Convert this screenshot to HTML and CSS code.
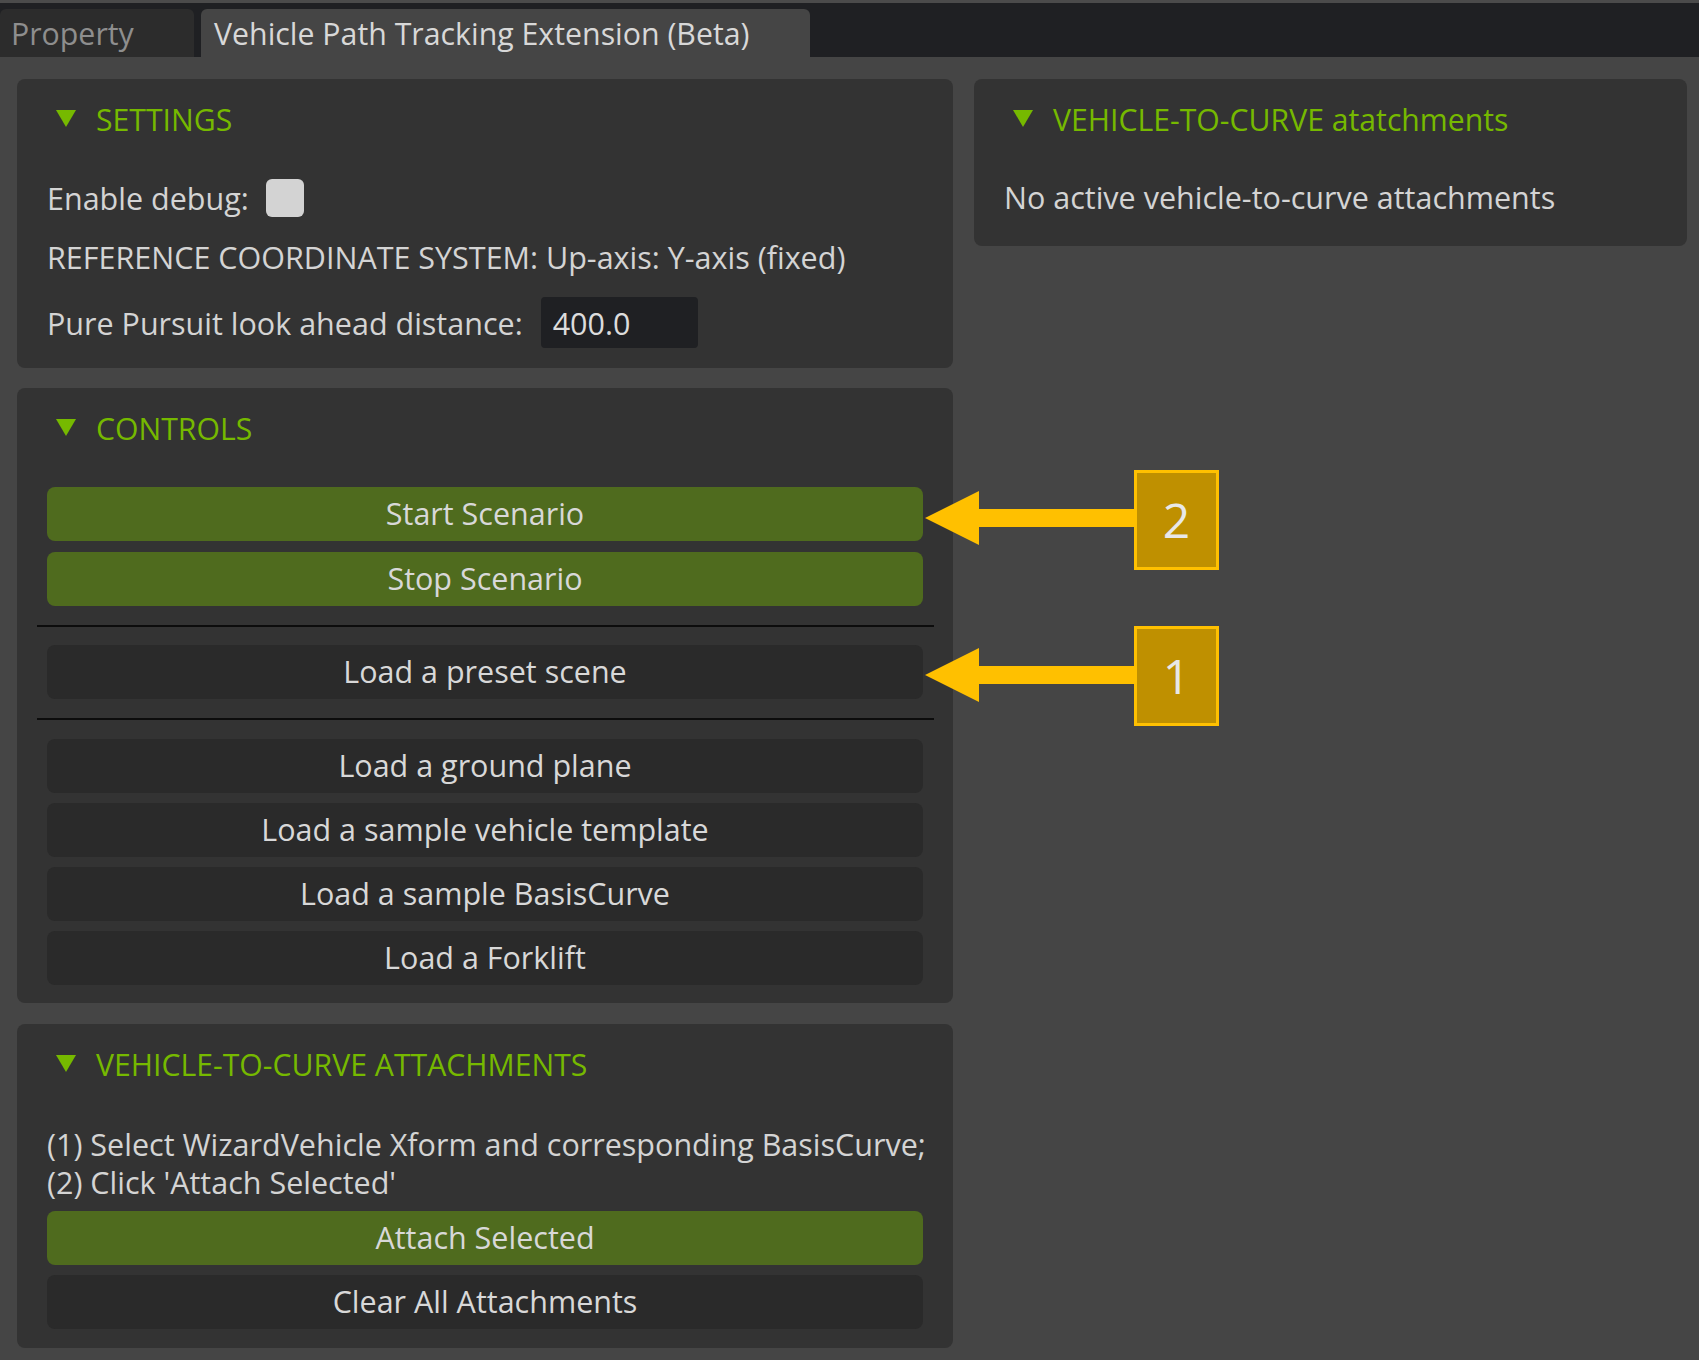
FILE: index.html
```html
<!DOCTYPE html>
<html>
<head>
<meta charset="utf-8">
<link rel="stylesheet" href="styles.css">
</head>
<body>
<div class="topbar">
  <div class="tab tab-inactive">Property</div>
  <div class="tab tab-active">Vehicle Path Tracking Extension (Beta)</div>
</div>
<div class="main">
  <div class="col col-left">
    <div class="panel">
      <div class="hdr"><svg class="tri" width="20" height="17" viewBox="0 0 20 17"><polygon points="0,0 20,0 10,17" fill="#76b900"/></svg><span>SETTINGS</span></div>
      <div class="row row-debug">Enable debug:<span class="checkbox"></span></div>
      <div class="row row-ref">REFERENCE COORDINATE SYSTEM: Up-axis: Y-axis (fixed)</div>
      <div class="row row-pp">Pure Pursuit look ahead distance:<span class="field">400.0</span></div>
    </div>
    <div class="panel">
      <div class="hdr"><svg class="tri" width="20" height="17" viewBox="0 0 20 17"><polygon points="0,0 20,0 10,17" fill="#76b900"/></svg><span>CONTROLS</span></div>
      <div class="btn green first">Start Scenario</div>
      <div class="btn green gap11">Stop Scenario</div>
      <div class="sep sep1"></div>
      <div class="btn dark">Load a preset scene</div>
      <div class="sep sep2"></div>
      <div class="btn dark">Load a ground plane</div>
      <div class="btn dark gap10">Load a sample vehicle template</div>
      <div class="btn dark gap10">Load a sample BasisCurve</div>
      <div class="btn dark gap10 last">Load a Forklift</div>
    </div>
    <div class="panel panel-att">
      <div class="hdr"><svg class="tri" width="20" height="17" viewBox="0 0 20 17"><polygon points="0,0 20,0 10,17" fill="#76b900"/></svg><span>VEHICLE-TO-CURVE ATTACHMENTS</span></div>
      <div class="instr">(1) Select WizardVehicle Xform and corresponding BasisCurve;<br>(2) Click 'Attach Selected'</div>
      <div class="btn green attach">Attach Selected</div>
      <div class="btn dark gap10 last">Clear All Attachments</div>
    </div>
  </div>
  <div class="col col-right">
    <div class="panel panel-right">
      <div class="hdr"><svg class="tri" width="20" height="17" viewBox="0 0 20 17"><polygon points="0,0 20,0 10,17" fill="#76b900"/></svg><span>VEHICLE-TO-CURVE atatchments</span></div>
      <div class="row row-none">No active vehicle-to-curve attachments</div>
    </div>
  </div>
</div>

<svg class="arrow arrow-2" width="220" height="60" viewBox="0 0 220 60"><polygon points="0,27 54,0 54,18 220,18 220,36 54,36 54,54" fill="#ffc000"/></svg>
<div class="callout callout-2">2</div>
<svg class="arrow arrow-1" width="220" height="60" viewBox="0 0 220 60"><polygon points="0,27 54,0 54,18 220,18 220,36 54,36 54,54" fill="#ffc000"/></svg>
<div class="callout callout-1">1</div>
</body>
</html>
```

FILE: styles.css
```css
* { box-sizing: border-box; }
html, body {
  margin: 0;
  padding: 0;
  background: #454545;
  width: 1699px;
  height: 1360px;
  overflow: hidden;
  font-family: "Open Sans", "Noto Sans", sans-serif;
  color: #d4d4d4;
  font-size: 30.5px;
}
.topbar {
  height: 57px;
  background: #1f2023;
  border-top: 3px solid #4b4b4b;
  padding-top: 6px;
  display: flex;
  align-items: flex-end;
}
.tab {
  height: 48px;
  border-radius: 6px 6px 0 0;
  display: flex;
  align-items: center;
  white-space: nowrap;
  font-size: 30.3px;
}
.tab-inactive {
  width: 194px;
  background: #2c2c2c;
  color: #8e8e8e;
  padding-left: 11px;
}
.tab-active {
  width: 609px;
  margin-left: 7px;
  background: #454545;
  color: #d8d8d8;
  padding-left: 13px;
}
.main {
  display: flex;
  padding: 22px 12px 0 17px;
  gap: 21px;
  align-items: flex-start;
}
.col {
  display: flex;
  flex-direction: column;
  gap: 20px;
}
.col-left { width: 936px; }
.col-right { width: 713px; }
.panel {
  background: #333333;
  border-radius: 8px;
  padding: 0 30px;
  display: flex;
  flex-direction: column;
}
.panel-att { margin-top: 1px; }
.hdr {
  height: 82px;
  display: flex;
  align-items: center;
  padding-left: 9px;
  padding-bottom: 2px;
  color: #76b900;
  white-space: nowrap;
  font-size: 30.2px;
}
.tri { flex: none; margin-right: 20px; margin-top: -1px; }
.row {
  display: flex;
  align-items: center;
  white-space: nowrap;
}
.row-debug { height: 38px; margin-top: 18px; }
.checkbox {
  width: 38px;
  height: 38px;
  background: #d3d3d3;
  border-radius: 6px;
  margin-left: 17px;
}
.row-ref { height: 38px; margin-top: 22px; padding-bottom: 2px; }
.row-pp { height: 51px; margin-top: 20px; margin-bottom: 20px; }
.field {
  width: 157px;
  height: 51px;
  background: #1f2023;
  border-radius: 4px;
  margin-left: 18px;
  display: flex;
  align-items: center;
  padding-left: 12px;
  color: #dcdcdc;
}
.btn {
  height: 54px;
  border-radius: 8px;
  display: flex;
  align-items: center;
  justify-content: center;
  white-space: nowrap;
  color: #d8d8d8;
  padding-bottom: 2px;
}
.btn.green { background: #4f6b1e; }
.btn.dark { background: #2a2a2a; }
.btn.first { margin-top: 17px; }
.btn.gap11 { margin-top: 11px; }
.btn.gap10 { margin-top: 10px; }
.btn.last { margin-bottom: 18px; }
.sep {
  height: 2px;
  background: #0c0c0c;
  margin-left: -10px;
  margin-right: -11px;
}
.sep1 { margin-top: 19px; margin-bottom: 18px; }
.sep2 { margin-top: 19px; margin-bottom: 19px; }
.instr {
  margin-top: 19px;
  margin-bottom: 1px;
  line-height: 38px;
  white-space: nowrap;
}
.btn.attach { margin-top: 9px; }
.panel-att .btn.last { margin-bottom: 19px; }
.panel-right { padding-bottom: 30px; }
.row-none { height: 38px; margin-top: 17px; }

.arrow {
  position: absolute;
  left: 925px;
}
.arrow-2 { top: 491px; }
.arrow-1 { top: 648px; }
.callout {
  position: absolute;
  left: 1134px;
  width: 85px;
  height: 100px;
  background: #bf9000;
  border: 3px solid #ffc000;
  color: #e8e8e8;
  font-family: "Open Sans", "Noto Sans", sans-serif;
  font-size: 48px;
  display: flex;
  align-items: center;
  justify-content: center;
  line-height: 1;
}
.callout-2 { top: 470px; }
.callout-1 { top: 626px; }
```
